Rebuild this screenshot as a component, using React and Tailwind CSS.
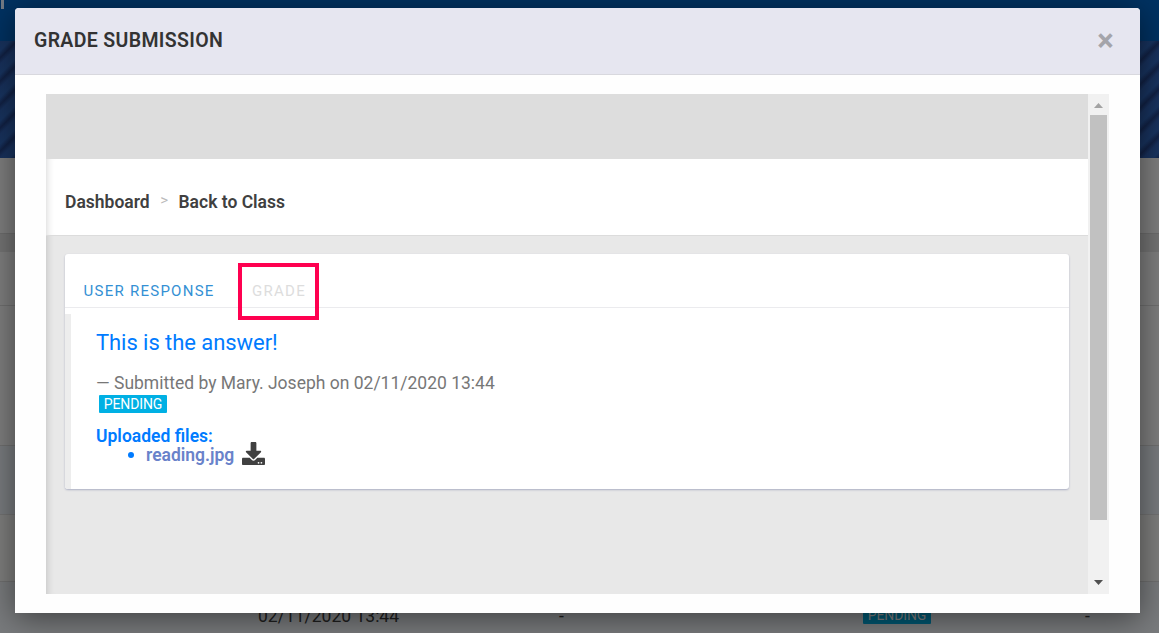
import React from "react";
import { FaDownload } from "react-icons/fa";

const App = () => {
  return (
    <div className="relative w-full h-[633px] overflow-hidden font-['Roboto',sans-serif]">
      <PageBehind />
      <div className="absolute left-[15px] top-[8px] w-[1125px] h-[605px] flex flex-col bg-[#fefefe] rounded-t-[4px] shadow-[0_5px_32px_rgba(0,0,0,0.5)]">
        <div className="h-[67px] shrink-0 flex items-center justify-between pl-[19px] pr-[26.5px] pb-[2px] bg-[#e6e6f0] border-b border-[#d8d8de] rounded-t-[4px]">
          <h4 className="pt-[1px] text-[19.5px] leading-[24px] font-semibold tracking-[0.34px] text-[#333333]">
            GRADE SUBMISSION
          </h4>
          <button className="w-[16px] h-[24px] flex items-center justify-center text-[31px] leading-none font-bold text-[#a4a4aa]">
            ×
          </button>
        </div>
        <div className="mx-[31px] mt-[19px] h-[500px] flex">
          <SubmissionFrame />
          <ScrollBar />
        </div>
      </div>
    </div>
  );
};

export default App;

const SubmissionFrame = () => {
  return (
    <div className="w-[1042px] flex flex-col bg-[#e8e8e8]">
      <div className="h-[65px] bg-[#dddddd]"></div>
      <div className="flex-1 flex flex-col shadow-[inset_8px_0_8px_-8px_rgba(0,0,0,0.2)]">
        <div className="h-[77px] flex items-center pl-[19px] pt-[10px] bg-white border-b border-[#dcdcdc] text-[17.5px] font-semibold text-[#404040] shadow-[inset_8px_0_8px_-8px_rgba(0,0,0,0.2)]">
          <span className="w-[85px]">Dashboard</span>
          <span className="w-[28.5px] pb-[3px] text-center text-[15px] font-normal text-[#bbbbbb]">
            &gt;
          </span>
          <span>Back to Class</span>
        </div>
        <div className="ml-[19px] mt-[18px] w-[1004px] h-[235px] flex flex-col bg-white rounded-[3px] shadow-[0_1px_2px_rgba(80,90,140,0.4)]">
          <div className="h-[54px] shrink-0 flex border-b border-[#ebebee] text-[15px] leading-[20px] tracking-[1.26px]">
            <span className="w-[173px] pl-[18.5px] pt-[27px] text-[#3490d4]">
              USER RESPONSE
            </span>
            <span className="w-[80.5px] h-[57px] mt-[9px] pl-[10px] pt-[14px] border-4 border-[#ff0050] text-[#dddddd]">
              GRADE
            </span>
          </div>
          <Answer />
        </div>
      </div>
    </div>
  );
};

const Answer = () => {
  return (
    <div className="mt-[6px] h-[175px] border-l-[6px] border-[#ededed] rounded-bl-[3px] pl-[25px] text-[#007bff]">
      <p className="pt-[15px] text-[22px] leading-[28px] tracking-[-0.06px]">
        This is the answer!
      </p>
      <p className="mt-[15px] text-[17.5px] leading-[22px] text-[#777777]">
        — Submitted by Mary. Joseph on 02/11/2020 13:44
      </p>
      <div className="ml-[3px] mt-[1px] w-[68px] h-[18px] flex items-center justify-center rounded-[1px] bg-[#00b0e4] text-[14px] tracking-[-0.1px] text-white">
        PENDING
      </div>
      <p className="mt-[13px] text-[17.5px] leading-[20px] font-semibold">
        Uploaded files:
      </p>
      <div className="-mt-[2px] h-[20px] flex items-center text-[17.5px] font-semibold">
        <span className="ml-[32px] mt-[2px] w-[6px] h-[6px] rounded-full bg-[#007bff]"></span>
        <span className="ml-[12px] pt-[2px] w-[89px] text-[#6982ca]">
          reading.jpg
        </span>
        <FaDownload className="ml-[7px] mb-[2px] w-[23px] h-[23px] text-[#404040]" />
      </div>
    </div>
  );
};

const ScrollBar = () => {
  return (
    <div className="w-[21px] flex flex-col items-center bg-[#f1f1f1]">
      <svg className="w-[21px] h-[21px] shrink-0" viewBox="0 0 21 21">
        <path d="M6 14h9l-4.5-5z" fill="#a3a3a3" />
      </svg>
      <div className="w-[17px] h-[405px] bg-[#c1c1c1]"></div>
      <svg className="w-[21px] h-[21px] mt-auto shrink-0" viewBox="0 0 21 21">
        <path d="M6 7h9l-4.5 5z" fill="#505050" />
      </svg>
    </div>
  );
};

// class page dimmed under the dialog
const PageBehind = () => {
  return (
    <div className="flex flex-col h-full">
      <div className="h-[41px] shrink-0 bg-[#003262]">
        <div className="ml-[1px] w-[3px] h-[9px] bg-[#737b85]"></div>
      </div>
      <div className="h-[117px] shrink-0 bg-[repeating-linear-gradient(135deg,#18315c_0px,#183460_7px,#112144_12px,#18315c_16.5px)]"></div>
      <div className="h-[76px] shrink-0 bg-[#7f7f7f] border-b border-[#6d6d6d]"></div>
      <div className="h-[18px] shrink-0 bg-[#747474]"></div>
      <div className="h-[54px] shrink-0 bg-[#7f7f7f] border-b border-[#707070]"></div>
      <div className="h-[139px] shrink-0 bg-[#7f7f7f]"></div>
      <div className="h-[69px] shrink-0 bg-[#797c7f] border-t border-[#707070]"></div>
      <div className="h-[67px] shrink-0 bg-[#7f7f7e] border-t border-[#737373]"></div>
      <div className="h-[52px] shrink-0 flex items-start pt-[23px] bg-[#797b7d] border-t border-[#707070] text-[17.5px] leading-[22px] text-[#202020]">
        <span className="ml-[258px] w-[301px]">02/11/2020 13:44</span>
        <span className="w-[304px]">-</span>
        <span className="mt-[1px] w-[68px] h-[18px] flex items-center justify-center rounded-[1px] bg-[#005872] text-[14px] leading-[18px] tracking-[-0.1px] text-[#7f7f7f]">
          PENDING
        </span>
        <span className="ml-[154px]">-</span>
      </div>
    </div>
  );
};
